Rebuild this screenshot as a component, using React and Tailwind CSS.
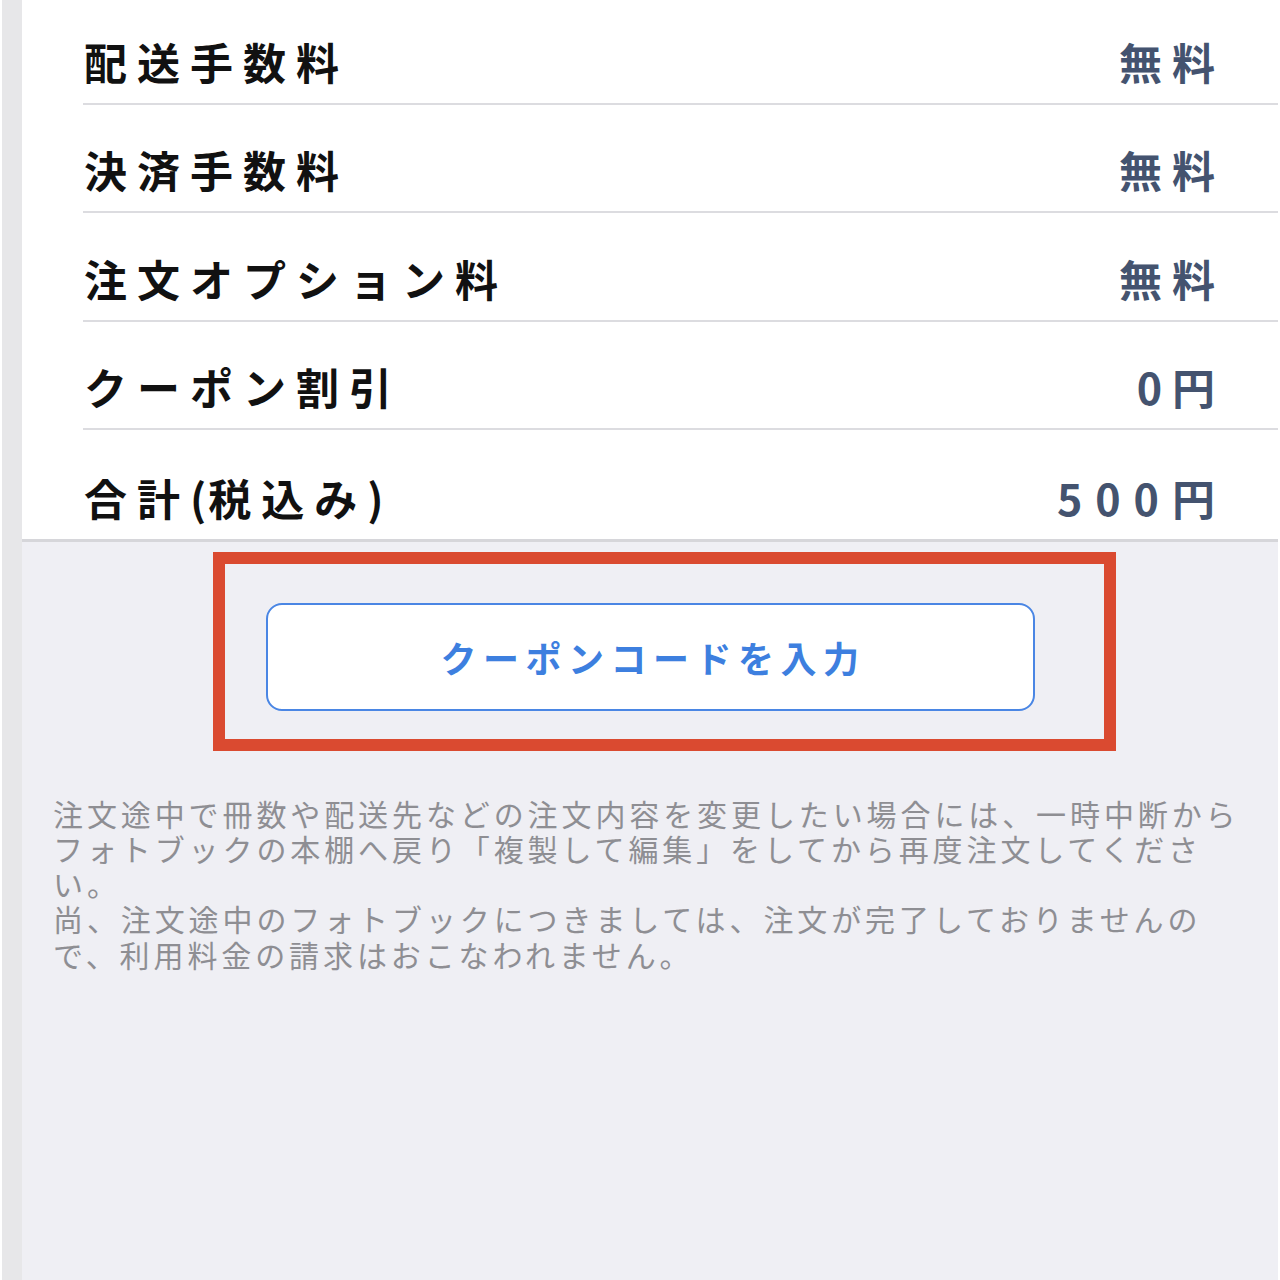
import React from 'react';

const fees = [
  { label: '配送手数料', value: '無料' },
  { label: '決済手数料', value: '無料' },
  { label: '注文オプション料', value: '無料' },
  { label: 'クーポン割引', value: '0円' },
];

const notes = [
  '注文途中で冊数や配送先などの注文内容を変更したい場合には、一時中断から',
  'フォトブックの本棚へ戻り「複製して編集」をしてから再度注文してくださ',
  'い。',
  '尚、注文途中のフォトブックにつきましては、注文が完了しておりませんの',
  'で、利用料金の請求はおこなわれません。',
];

function FeeRow({ label, value, last }) {
  return (
    <div
      className={`flex items-end justify-between h-[108.5px] pb-[20px] pl-[1px] pr-[53px] ${
        last ? '' : 'border-b-2 border-[#dcdce0]'
      }`}
    >
      <span className="text-[43px] leading-none font-bold tracking-[10px] text-[#111111]">{label}</span>
      <span className="text-[43px] leading-none font-bold tracking-[10px] text-[#44536f]">{value}</span>
    </div>
  );
}

export default function App() {
  return (
    <div
      className="flex w-[1280px] h-[1280px] overflow-hidden bg-white"
      style={{ fontFamily: '"Noto Sans CJK JP", "Noto Sans", sans-serif' }}
    >
      {/* left edge of the previous screen */}
      <div className="w-[20px] ml-[2px] shrink-0 bg-[#e7e7e9]" />

      <div className="flex-1 flex flex-col bg-[#efeff4] mr-[2px]">
        {/* ── Fee summary card ── */}
        <div className="bg-white border-b-[3px] border-[#d6d6da] pl-[61px] -mt-[4px]">
          {fees.map((f) => (
            <FeeRow key={f.label} label={f.label} value={f.value} />
          ))}
          <FeeRow
            label={
              <>
                合計<span className="tracking-[2px]">(</span>税込み<span className="tracking-[2px]">)</span>
              </>
            }
            value={
              <>
                <span className="tracking-[13px]">500</span>円
              </>
            }
            last
          />
        </div>

        {/* ── Coupon button ── */}
        <div className="relative flex justify-center mt-[61px]">
          <button className="w-[769px] h-[108px] rounded-[16px] border-2 border-[#4a86e4] bg-white text-[36px] font-bold tracking-[6.5px] pl-[6px] text-[#3d7fdf]">
            クーポンコードを入力
          </button>
          {/* highlight frame */}
          <div className="absolute left-[191px] top-[-51px] w-[903px] h-[199px] border-[12px] border-[#da4a30] pointer-events-none" />
        </div>

        {/* ── Notes ── */}
        <p className="mt-[85px] pl-[31px] text-[30px] leading-[35.3px] tracking-[3.9px] text-[#8e8e93] whitespace-nowrap">
          {notes.map((line, i) => (
            <React.Fragment key={line}>
              {i > 0 && <br />}
              {line}
            </React.Fragment>
          ))}
        </p>
      </div>
    </div>
  );
}
